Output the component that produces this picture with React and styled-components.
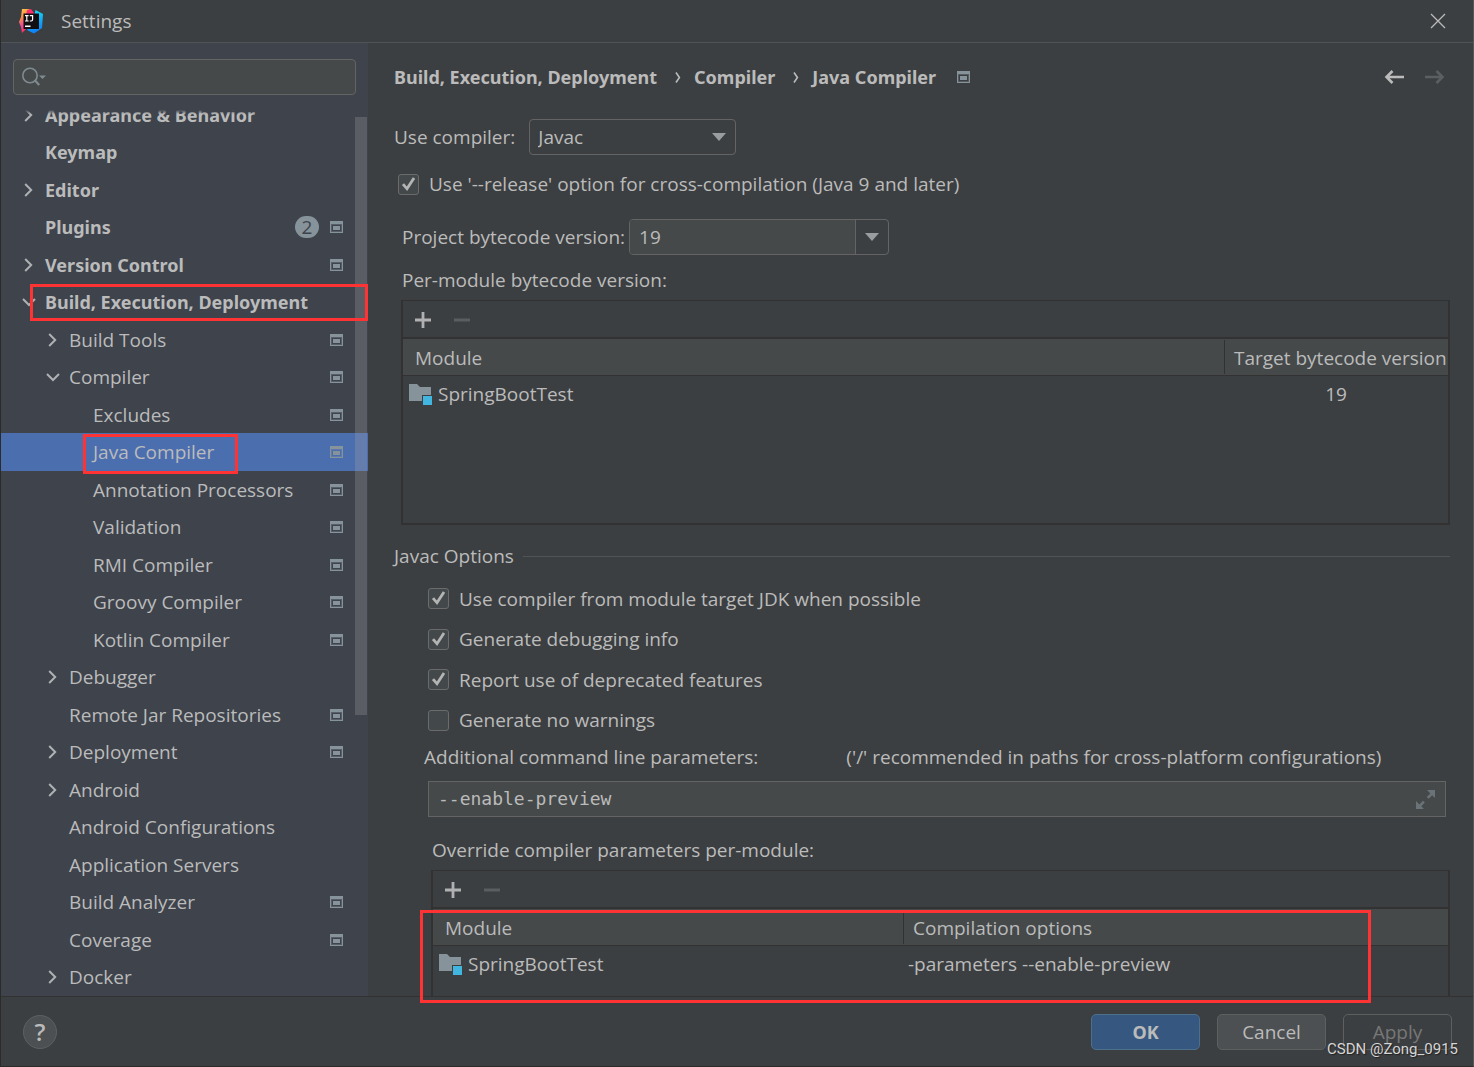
import { useState } from 'react'
import styled, { createGlobalStyle, css } from 'styled-components'

const TREE = [
    { name: 'Appearance & Behavior', level: 0, arrow: 'right' },
    { name: 'Keymap', level: 0 },
    { name: 'Editor', level: 0, arrow: 'right' },
    { name: 'Plugins', level: 0, badge: 2, scoped: true },
    { name: 'Version Control', level: 0, arrow: 'right', scoped: true },
    { name: 'Build, Execution, Deployment', level: 0, arrow: 'down', mark: 'row' },
    { name: 'Build Tools', level: 1, arrow: 'right', scoped: true },
    { name: 'Compiler', level: 1, arrow: 'down', scoped: true },
    { name: 'Excludes', level: 2, scoped: true },
    { name: 'Java Compiler', level: 2, scoped: true, selected: true, mark: 'label' },
    { name: 'Annotation Processors', level: 2, scoped: true },
    { name: 'Validation', level: 2, scoped: true },
    { name: 'RMI Compiler', level: 2, scoped: true },
    { name: 'Groovy Compiler', level: 2, scoped: true },
    { name: 'Kotlin Compiler', level: 2, scoped: true },
    { name: 'Debugger', level: 1, arrow: 'right' },
    { name: 'Remote Jar Repositories', level: 1, scoped: true },
    { name: 'Deployment', level: 1, arrow: 'right', scoped: true },
    { name: 'Android', level: 1, arrow: 'right' },
    { name: 'Android Configurations', level: 1 },
    { name: 'Application Servers', level: 1 },
    { name: 'Build Analyzer', level: 1, scoped: true },
    { name: 'Coverage', level: 1, scoped: true },
    { name: 'Docker', level: 1, arrow: 'right' },
]

const JAVAC_OPTIONS = [
    { label: 'Use compiler from module target JDK when possible', on: true },
    { label: 'Generate debugging info', on: true },
    { label: 'Report use of deprecated features', on: true },
    { label: 'Generate no warnings', on: false },
]

export default function App() {
    return (
        <>
            <GlobalStyle />
            <Dialog>
                <TitleBar>
                    <Logo />
                    <WindowTitle>Settings</WindowTitle>
                    <IconButton aria-label="Close">
                        <svg width="16" height="16" viewBox="0 0 16 16" fill="none" stroke="#bbbbbb" strokeWidth="1.3">
                            <path d="M1 1l14 14M15 1L1 15" />
                        </svg>
                    </IconButton>
                </TitleBar>
                <Body>
                    <Sidebar />
                    <CompilerPage />
                </Body>
                <Footer>
                    <HelpButton aria-label="Help">?</HelpButton>
                    <FooterButtons>
                        <Button $primary>OK</Button>
                        <Button>Cancel</Button>
                        <Button disabled>Apply</Button>
                    </FooterButtons>
                    <Watermark>CSDN @Zong_0915</Watermark>
                </Footer>
            </Dialog>
        </>
    )
}

function Sidebar() {
    return (
        <Side>
            <SearchBox>
                <SearchIcon />
                <SearchInput type="text" aria-label="Search settings" />
            </SearchBox>
            <TreeView>
                <TreeList>
                    {TREE.map((item) => (
                        <TreeRow key={item.name} $level={item.level} $selected={item.selected}>
                            <ArrowSlot>{item.arrow && <Chevron dir={item.arrow} />}</ArrowSlot>
                            <TreeLabel href="#" $bold={item.level === 0}>
                                {item.name}
                                {item.mark === 'label' && <LabelMark />}
                            </TreeLabel>
                            {item.badge && <Badge>{item.badge}</Badge>}
                            {item.scoped && <ScopeIcon />}
                            {item.mark === 'row' && <RowMark />}
                        </TreeRow>
                    ))}
                </TreeList>
                <ScrollThumb />
            </TreeView>
        </Side>
    )
}

function CompilerPage() {
    const [params, setParams] = useState('--enable-preview')
    const [version, setVersion] = useState('19')

    return (
        <Page>
            <PageHeader>
                <Crumb>Build, Execution, Deployment</Crumb>
                <CrumbArrow />
                <Crumb>Compiler</Crumb>
                <CrumbArrow />
                <Crumb>Java Compiler</Crumb>
                <CrumbScope><ScopeIcon /></CrumbScope>
                <History>
                    <IconButton aria-label="Back"><ArrowIcon color="#bbbbbb" /></IconButton>
                    <IconButton aria-label="Forward" disabled><ArrowIcon color="#5c5f61" flip /></IconButton>
                </History>
            </PageHeader>

            <CompilerRow>
                <label htmlFor="compiler">Use compiler:</label>
                <SelectBox>
                    <Select id="compiler" defaultValue="Javac">
                        <option>Javac</option>
                        <option>Eclipse</option>
                    </Select>
                    <Triangle />
                </SelectBox>
            </CompilerRow>

            <ReleaseRow>
                <CheckBox label="Use '--release' option for cross-compilation (Java 9 and later)" on />
            </ReleaseRow>

            <VersionRow>
                <label htmlFor="bytecode">Project bytecode version:</label>
                <Combo>
                    <ComboInput id="bytecode" value={version} onChange={(e) => setVersion(e.target.value)} />
                    <ComboButton aria-label="Show versions"><Triangle /></ComboButton>
                </Combo>
            </VersionRow>

            <ModuleLabel>Per-module bytecode version:</ModuleLabel>
            <ModulePanel>
                <Toolbar />
                <Table>
                    <colgroup>
                        <col />
                        <TargetCol />
                    </colgroup>
                    <thead>
                        <tr>
                            <Th><HeadText>Module</HeadText></Th>
                            <Th><HeadText $divided>Target bytecode version</HeadText></Th>
                        </tr>
                    </thead>
                    <tbody>
                        <tr>
                            <Td><ModuleName><FolderIcon />SpringBootTest</ModuleName></Td>
                            <Td $center>19</Td>
                        </tr>
                    </tbody>
                </Table>
            </ModulePanel>

            <Options>
                <Legend>Javac Options</Legend>
                <OptionList>
                    {JAVAC_OPTIONS.map((option) => (
                        <CheckBox key={option.label} {...option} />
                    ))}
                </OptionList>
                <ParamsHead>
                    <label htmlFor="params">Additional command line parameters:</label>
                    <span>('/' recommended in paths for cross-platform configurations)</span>
                </ParamsHead>
                <ParamsBox>
                    <ParamsInput id="params" value={params} onChange={(e) => setParams(e.target.value)} />
                    <IconButton aria-label="Expand"><ExpandIcon /></IconButton>
                </ParamsBox>
                <OverrideLabel>Override compiler parameters per-module:</OverrideLabel>
                <OverridePanel>
                    <Toolbar />
                    <Table>
                        <colgroup>
                            <OverrideCol />
                            <col />
                        </colgroup>
                        <thead>
                            <tr>
                                <Th><HeadText>Module</HeadText></Th>
                                <Th><HeadText $divided>Compilation options</HeadText></Th>
                            </tr>
                        </thead>
                        <tbody>
                            <tr>
                                <Td><ModuleName><FolderIcon />SpringBootTest</ModuleName></Td>
                                <Td>-parameters --enable-preview</Td>
                            </tr>
                        </tbody>
                    </Table>
                    <TableMark />
                </OverridePanel>
            </Options>
        </Page>
    )
}

function CheckBox({ label, on }) {
    const [checked, setChecked] = useState(!!on)

    return (
        <CheckLabel>
            <CheckSlot>
                <CheckInput type="checkbox" checked={checked} onChange={() => setChecked(!checked)} />
                {checked && (
                    <CheckMark width="21" height="21" viewBox="0 0 21 21" fill="none" stroke="#b4b4b4" strokeWidth="2.8">
                        <path d="M5 10.2l4 4.6L16 4" />
                    </CheckMark>
                )}
            </CheckSlot>
            {label}
        </CheckLabel>
    )
}

function Toolbar() {
    return (
        <Tools>
            <IconButton aria-label="Add">
                <svg width="16" height="16" viewBox="0 0 16 16" stroke="#afb1b3" strokeWidth="2.8">
                    <path d="M8 0v16M0 8h16" />
                </svg>
            </IconButton>
            <IconButton aria-label="Remove" disabled>
                <svg width="16" height="16" viewBox="0 0 16 16" stroke="#5b5e60" strokeWidth="3">
                    <path d="M0 8h16" />
                </svg>
            </IconButton>
        </Tools>
    )
}

function Chevron({ dir }) {
    return (
        <svg width="16" height="16" viewBox="0 0 16 16" fill="none" stroke="#afb1b3" strokeWidth="2">
            <path d={dir === 'right' ? 'M5.2 2l6 6-6 6' : 'M3 5l6 6 6-6'} />
        </svg>
    )
}

function CrumbArrow() {
    return (
        <CrumbSvg width="6" height="11" viewBox="0 0 6 11" fill="none" stroke="#bbbbbb" strokeWidth="1.6">
            <path d="M1 0.5l3.4 5L1 10.5" />
        </CrumbSvg>
    )
}

function ScopeIcon() {
    return (
        <svg width="13" height="12" viewBox="0 0 13 12" fill="#87939a">
            <path fillRule="evenodd" d="M0 0h13v12H0zM1 3v8h11V3z" />
            <path d="M3 5h7v4H3z" />
            <path fillOpacity="0.35" fillRule="evenodd" d="M1 3h11v8H1zM2 4v6h9V4z" />
        </svg>
    )
}

function SearchIcon() {
    return (
        <svg width="25" height="20" viewBox="0 0 25 20" fill="none" stroke="#7f8b91" strokeWidth="1.6">
            <circle cx="8" cy="8.5" r="7.2" />
            <path d="M12.8 13.3l4.4 4.6" strokeWidth="2.2" />
            <path d="M17 8.5h7L20.5 12z" fill="#7f8b91" stroke="none" />
        </svg>
    )
}

function ArrowIcon({ color, flip }) {
    return (
        <svg width="20" height="14" viewBox="0 0 20 14" fill="none" stroke={color} strokeWidth="2.6">
            <path d={flip ? 'M0 7h18M11.5 1l6 6-6 6' : 'M20 7H2M8.5 1l-6 6 6 6'} />
        </svg>
    )
}

function Triangle() {
    return (
        <TriangleSvg width="14" height="8" viewBox="0 0 14 8" fill="#9a9da0">
            <path d="M0 0h14L7 8z" />
        </TriangleSvg>
    )
}

function ExpandIcon() {
    return (
        <svg width="19" height="19" viewBox="0 0 19 19" fill="#6a7478">
            <path d="M11 0h8v8l-2.8-2.8-3.6 3.6-1.8-1.8 3.6-3.6z" />
            <path d="M0 11v8h8l-2.8-2.8 3.6-3.6-1.8-1.8-3.6 3.6z" />
        </svg>
    )
}

function FolderIcon() {
    return (
        <svg width="23" height="22" viewBox="0 0 23 22">
            <path fill="#87939a" d="M0 1h8l3 3h11v8h-9v6H0z" />
            <path fill="#40b6e0" d="M14 13h9v9h-9z" />
        </svg>
    )
}

function Logo() {
    return (
        <svg width="25" height="25" viewBox="0 0 25 25">
            <defs>
                <linearGradient id="warm" x1="0" y1="0" x2="0.3" y2="1">
                    <stop offset="0" stopColor="#fdd04a" />
                    <stop offset="0.4" stopColor="#fc8a4a" />
                    <stop offset="0.7" stopColor="#e84a9a" />
                    <stop offset="1" stopColor="#fe2d5a" />
                </linearGradient>
                <linearGradient id="cool" x1="0.3" y1="0" x2="0.5" y2="1">
                    <stop offset="0" stopColor="#15e0f5" />
                    <stop offset="1" stopColor="#0f7cf5" />
                </linearGradient>
            </defs>
            <path fill="url(#warm)" d="M3 0h7l3 5-5 14-5 5-1-6-2-5 2-5z" />
            <path fill="#fb2f6b" d="M8 1l4-1 3 4v2H7z" />
            <path fill="url(#cool)" d="M16.5 1L24 5l-1 14-8 5.500-7-3.500 6-9z" />
            <path fill="#120f12" d="M4.5 4.5H20V20H4.500z" />
            <path fill="none" stroke="#fff" strokeWidth="1.2" d="M6 6.600h3.600M7.800 6.600v5.400M6 12h3.600M10.800 6.600h2.800v4q0 1.400-1.400 1.400h-1.400" />
            <path fill="#fff" d="M6 16.500h5.500v1.500H6z" />
        </svg>
    )
}

const GlobalStyle = createGlobalStyle`
    * {
        box-sizing: border-box;
    }

    body {
        margin: 0;
        background: #3c3f41;
        color: #bbbbbb;
        font-family: 'Open Sans', 'Noto Sans CJK SC', sans-serif;
        font-size: 19px;
        line-height: 24px;
    }

    button, input, select {
        font: inherit;
        color: inherit;
    }

    svg {
        display: block;
        flex-shrink: 0;
    }
`

const bold = css`
    font-family: 'Noto Sans', 'Noto Sans CJK SC', sans-serif;
    font-size: 18px;
    font-weight: 700;
`

const Dialog = styled.div`
    display: flex;
    flex-direction: column;
    height: 100vh;
    overflow: hidden;
    border-left: 1px solid #2b2b2b;
    border-right: 1px solid #55585a;
    border-bottom: 1px solid #2b2b2b;
`

const TitleBar = styled.header`
    display: flex;
    align-items: center;
    flex-shrink: 0;
    height: 43px;
    padding: 0 27px 0 18px;
    border-bottom: 1px solid #515456;
`

const WindowTitle = styled.h1`
    flex: 1;
    margin: 0 0 0 17px;
    font-size: 19px;
    font-weight: 400;
`

const IconButton = styled.button`
    display: flex;
    padding: 0;
    border: 0;
    background: none;
`

const Body = styled.div`
    display: flex;
    flex: 1;
    min-height: 0;
`

const Side = styled.nav`
    display: flex;
    flex-direction: column;
    flex-shrink: 0;
    width: 367px;
    padding-top: 16px;
    background: #3e434c;
`

const SearchBox = styled.div`
    display: flex;
    align-items: center;
    flex-shrink: 0;
    height: 36px;
    margin: 0 12px 14px 12px;
    padding: 0 8px;
    border: 1px solid #646464;
    border-radius: 4px;
    background: #45494a;
`

const SearchInput = styled.input`
    flex: 1;
    min-width: 0;
    border: 0;
    outline: 0;
    background: none;
`

const TreeView = styled.div`
    position: relative;
    display: flex;
    flex: 1;
    flex-direction: column;
    justify-content: flex-end;
    min-height: 0;
    overflow: hidden;

    /* rows fade out under the search box */
    &::before {
        content: '';
        position: absolute;
        inset: 0 14px auto 0;
        z-index: 1;
        height: 5px;
        background: linear-gradient(#3e434c 20%, transparent);
    }
`

const TreeList = styled.ul`
    display: grid;
    grid-auto-rows: 37px 38px;
    margin: 0;
    padding: 0;
    list-style: none;
`

const TreeRow = styled.li`
    position: relative;
    display: flex;
    align-items: center;
    padding: 0 25px 0 ${({ $level }) => 19 + $level * 24}px;
    background: ${({ $selected }) => ($selected ? '#4b6eaf' : 'none')};
`

const ArrowSlot = styled.span`
    width: 16px;
    margin-right: 9px;
`

const TreeLabel = styled.a`
    position: relative;
    margin-right: auto;
    color: inherit;
    text-decoration: none;
    white-space: nowrap;
    ${({ $bold }) => $bold && bold}
`

const Badge = styled.span`
    width: 24px;
    margin-right: 11px;
    border-radius: 11px;
    background: #87939a;
    color: #3e434c;
    line-height: 22px;
    text-align: center;
`

const ScrollThumb = styled.div`
    position: absolute;
    top: 8px;
    right: 1px;
    width: 12px;
    height: 598px;
    background: rgba(166, 166, 166, 0.28);
`

const mark = css`
    position: absolute;
    z-index: 2;
    border: 3px solid #ff3333;
    pointer-events: none;
`

const RowMark = styled.span`
    ${mark}
    inset: 1px 0 0 29px;
`

const LabelMark = styled.span`
    ${mark}
    inset: -6px -24px -10px -10px;
`

const TableMark = styled.span`
    ${mark}
    inset: 39px 77px -7px -13px;
`

const Page = styled.main`
    display: flex;
    flex: 1;
    flex-direction: column;
    min-width: 0;
    padding: 20px 23px 0 26px;
`

const PageHeader = styled.div`
    display: flex;
    align-items: center;
    height: 28px;
    padding-right: 5px;
`

const Crumb = styled.span`
    ${bold}
    white-space: nowrap;
`

const CrumbSvg = styled.svg`
    margin: 0 13px 0 18px;
`

const CrumbScope = styled.span`
    margin-left: 21px;
`

const History = styled.div`
    display: flex;
    gap: 21px;
    margin-left: auto;
`

const CompilerRow = styled.div`
    display: flex;
    align-items: center;
    gap: 14px;
    margin-top: 28px;
`

const SelectBox = styled.div`
    display: flex;
    align-items: center;
    width: 207px;
    height: 36px;
    border: 1px solid #646464;
    border-radius: 4px;
`

const Select = styled.select`
    flex: 1;
    height: 34px;
    margin-right: -24px;
    padding: 0 8px;
    appearance: none;
    border: 0;
    outline: 0;
    background: none;
`

const TriangleSvg = styled.svg`
    margin-right: 9px;
    pointer-events: none;
`

const ReleaseRow = styled.div`
    margin: 17px 0 0 4px;
`

const CheckLabel = styled.label`
    display: flex;
    align-items: center;
    gap: 10px;
    height: 24px;
`

const CheckSlot = styled.span`
    position: relative;
    display: flex;
`

const CheckInput = styled.input`
    width: 21px;
    height: 21px;
    margin: 0;
    appearance: none;
    border: 1px solid #6b6b6b;
    border-radius: 3px;
    background: #43494a;
`

const CheckMark = styled.svg`
    position: absolute;
    inset: 0;
    pointer-events: none;
`

const VersionRow = styled.div`
    display: flex;
    align-items: center;
    gap: 4px;
    margin: 23px 0 0 8px;
`

const Combo = styled.div`
    display: flex;
    width: 260px;
    height: 36px;
    overflow: hidden;
    border: 1px solid #646464;
    border-radius: 4px;
`

const ComboInput = styled.input`
    flex: 1;
    min-width: 0;
    padding: 0 9px;
    border: 0;
    outline: 0;
    background: #45494a;
`

const ComboButton = styled.button`
    display: flex;
    align-items: center;
    width: 33px;
    padding: 0 0 0 9px;
    border: 0;
    border-left: 1px solid #646464;
    background: none;
`

const ModuleLabel = styled.div`
    margin: 13px 0 8px 8px;
`

const Panel = styled.section`
    border: 1px solid #323232;
    border-width: 1px 2px 2px;
`

const ModulePanel = styled(Panel)`
    height: 225px;
    margin-left: 7px;
`

const OverridePanel = styled(Panel)`
    position: relative;
    flex: 1;
    min-height: 0;
    margin-left: 37px;
    border-bottom: 0;
`

const Tools = styled.div`
    display: flex;
    align-items: center;
    gap: 23px;
    height: 38px;
    padding: 2px 0 0 12px;
    border-bottom: 2px solid #323232;
`

const Table = styled.table`
    width: 100%;
    border-collapse: collapse;
    table-layout: fixed;
`

const TargetCol = styled.col`
    width: 224px;
`

const OverrideCol = styled.col`
    width: 470px;
`

const Th = styled.th`
    padding: 1px 0;
    border-bottom: 1px solid #323232;
    background: #45494a;
    font-weight: 400;
    text-align: left;
    white-space: nowrap;
`

const HeadText = styled.div`
    height: 34px;
    padding-left: ${({ $divided }) => ($divided ? 9 : 12)}px;
    border-left: ${({ $divided }) => ($divided ? '1px solid #323232' : '0')};
    line-height: 36px;
`

const Td = styled.td`
    height: 36px;
    padding: 0 5px;
    text-align: ${({ $center }) => ($center ? 'center' : 'left')};
`

const ModuleName = styled.div`
    display: flex;
    align-items: center;
    gap: 6px;
    padding-left: 1px;
`

const Options = styled.section`
    display: flex;
    flex: 1;
    flex-direction: column;
    min-height: 0;
    margin-top: 19px;
`

const Legend = styled.h2`
    display: flex;
    align-items: center;
    gap: 9px;
    margin: 0;
    font-size: 19px;
    font-weight: 400;

    &::after {
        content: '';
        flex: 1;
        height: 1px;
        background: #515456;
    }
`

const OptionList = styled.div`
    display: grid;
    grid-auto-rows: 41px 40px;
    align-items: center;
    margin: 10px 0 0 34px;
`

const ParamsHead = styled.div`
    display: flex;
    gap: 88px;
    margin: 5px 0 12px 30px;
    white-space: nowrap;
`

const ParamsBox = styled.div`
    display: flex;
    align-items: center;
    flex-shrink: 0;
    height: 36px;
    margin: 0 4px 21px 34px;
    padding: 0 10px 0 9px;
    border: 1px solid #646464;
    background: #45494a;
`

const ParamsInput = styled.input`
    flex: 1;
    min-width: 0;
    padding: 0;
    border: 0;
    outline: 0;
    background: none;
    font-family: 'DejaVu Sans Mono', monospace;
    font-size: 18px;
`

const OverrideLabel = styled.div`
    margin: 0 0 8px 38px;
`

const Footer = styled.footer`
    position: relative;
    display: flex;
    align-items: center;
    justify-content: space-between;
    flex-shrink: 0;
    height: 70px;
    padding: 0 21px 0 22px;
    border-top: 1px solid #323232;
`

const HelpButton = styled.button`
    width: 34px;
    height: 34px;
    padding: 0;
    border: 1px solid #5e6060;
    border-radius: 50%;
    background: #4c5052;
    font-size: 24px;
    font-weight: 600;
    line-height: 30px;
`

const FooterButtons = styled.div`
    display: flex;
    gap: 17px;
`

const Button = styled.button`
    width: 109px;
    height: 36px;
    padding: 0;
    border: 1px solid ${({ $primary }) => ($primary ? '#4c708c' : '#5e6060')};
    border-radius: 5px;
    background: ${({ $primary }) => ($primary ? '#365880' : '#4c5052')};
    ${({ $primary }) => $primary && bold}

    &:disabled {
        background: none;
        color: #777777;
    }
`

const Watermark = styled.span`
    position: absolute;
    right: 15px;
    bottom: 5px;
    color: #d6d6d6;
    font-family: Roboto, sans-serif;
    font-size: 15px;
    text-shadow: 1px 1px 1px #222222;
`
